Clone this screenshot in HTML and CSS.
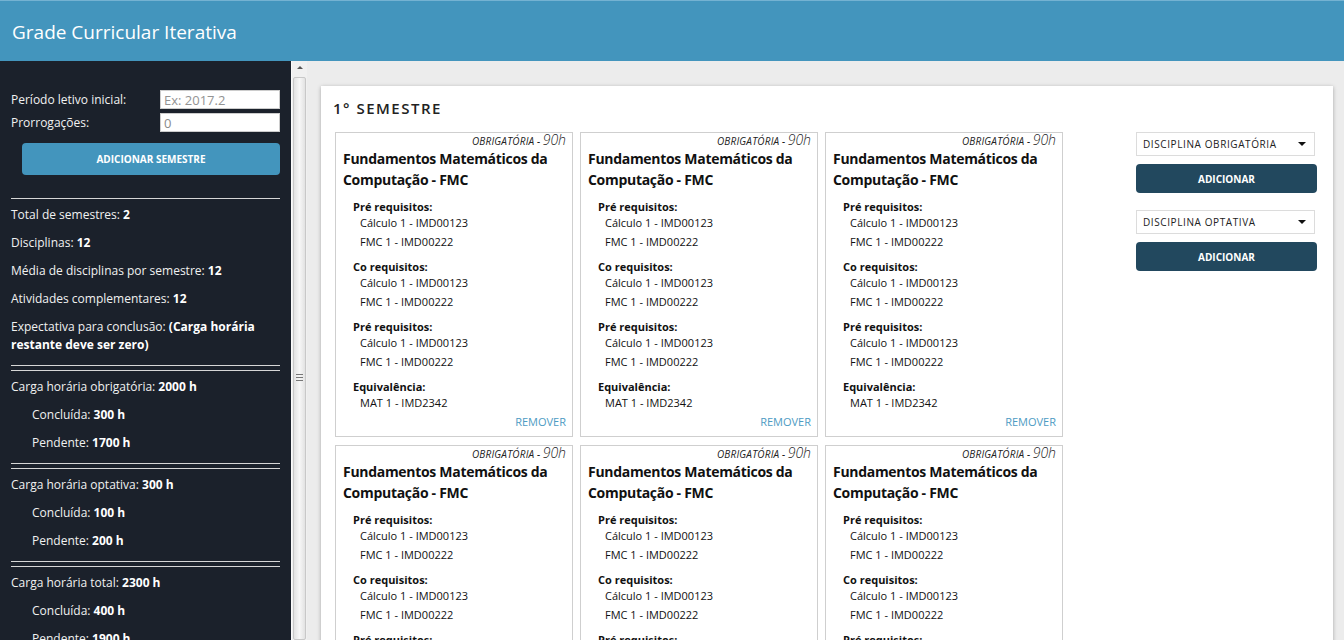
FILE: index.html
```html
<!DOCTYPE html>
<html lang="pt-BR">
<head>
<meta charset="utf-8">
<title>Grade Curricular Iterativa</title>
<link rel="stylesheet" href="styles.css">
</head>
<body>
<header class="topbar"><h1 class="brand">Grade Curricular Iterativa</h1></header>
<div class="layout">
  <aside class="sidebar">
    <div class="form-row"><label class="form-label">Período letivo inicial:</label><input class="form-input" placeholder="Ex: 2017.2"></div>
    <div class="form-row"><label class="form-label">Prorrogações:</label><input class="form-input" value="0"></div>
    <button class="btn btn-primary">ADICIONAR SEMESTRE</button>
    <div class="rule"></div>
    <div class="stats">
      <p>Total de semestres: <b>2</b></p>
      <p>Disciplinas: <b>12</b></p>
      <p>Média de disciplinas por semestre: <b>12</b></p>
      <p>Atividades complementares: <b>12</b></p>
      <p>Expectativa para conclusão: <b>(Carga horária restante deve ser zero)</b></p>
    </div>
    <div class="rule-double"></div>
    <div class="stats">
      <p>Carga horária obrigatória: <b>2000 h</b></p>
      <p class="sub">Concluída: <b>300 h</b></p>
      <p class="sub">Pendente: <b>1700 h</b></p>
    </div>
    <div class="rule-double"></div>
    <div class="stats">
      <p>Carga horária optativa: <b>300 h</b></p>
      <p class="sub">Concluída: <b>100 h</b></p>
      <p class="sub">Pendente: <b>200 h</b></p>
    </div>
    <div class="rule-double"></div>
    <div class="stats">
      <p>Carga horária total: <b>2300 h</b></p>
      <p class="sub">Concluída: <b>400 h</b></p>
      <p class="sub">Pendente: <b>1900 h</b></p>
    </div>
  </aside>
  <div class="scrollbar">
    <span class="scroll-arrow"></span>
    <div class="scroll-thumb"><span class="grip"></span></div>
  </div>
  <main class="content">
    <section class="panel">
      <h2 class="panel-title">1° SEMESTRE</h2>
      <div class="panel-body">
        <div class="cards">
          <article class="card">
            <div class="tag"><span class="tag-type">OBRIGATÓRIA</span> - <span class="tag-hours">90h</span></div>
            <h3 class="card-title">Fundamentos Matemáticos da Computação - FMC</h3>
            <div class="req"><h4>Pré requisitos:</h4><ul><li>Cálculo 1 - IMD00123</li><li>FMC 1 - IMD00222</li></ul></div>
            <div class="req"><h4>Co requisitos:</h4><ul><li>Cálculo 1 - IMD00123</li><li>FMC 1 - IMD00222</li></ul></div>
            <div class="req"><h4>Pré requisitos:</h4><ul><li>Cálculo 1 - IMD00123</li><li>FMC 1 - IMD00222</li></ul></div>
            <div class="req last"><h4>Equivalência:</h4><ul><li>MAT 1 - IMD2342</li></ul></div>
            <div class="remove">REMOVER</div>
          </article>
          <article class="card">
            <div class="tag"><span class="tag-type">OBRIGATÓRIA</span> - <span class="tag-hours">90h</span></div>
            <h3 class="card-title">Fundamentos Matemáticos da Computação - FMC</h3>
            <div class="req"><h4>Pré requisitos:</h4><ul><li>Cálculo 1 - IMD00123</li><li>FMC 1 - IMD00222</li></ul></div>
            <div class="req"><h4>Co requisitos:</h4><ul><li>Cálculo 1 - IMD00123</li><li>FMC 1 - IMD00222</li></ul></div>
            <div class="req"><h4>Pré requisitos:</h4><ul><li>Cálculo 1 - IMD00123</li><li>FMC 1 - IMD00222</li></ul></div>
            <div class="req last"><h4>Equivalência:</h4><ul><li>MAT 1 - IMD2342</li></ul></div>
            <div class="remove">REMOVER</div>
          </article>
          <article class="card">
            <div class="tag"><span class="tag-type">OBRIGATÓRIA</span> - <span class="tag-hours">90h</span></div>
            <h3 class="card-title">Fundamentos Matemáticos da Computação - FMC</h3>
            <div class="req"><h4>Pré requisitos:</h4><ul><li>Cálculo 1 - IMD00123</li><li>FMC 1 - IMD00222</li></ul></div>
            <div class="req"><h4>Co requisitos:</h4><ul><li>Cálculo 1 - IMD00123</li><li>FMC 1 - IMD00222</li></ul></div>
            <div class="req"><h4>Pré requisitos:</h4><ul><li>Cálculo 1 - IMD00123</li><li>FMC 1 - IMD00222</li></ul></div>
            <div class="req last"><h4>Equivalência:</h4><ul><li>MAT 1 - IMD2342</li></ul></div>
            <div class="remove">REMOVER</div>
          </article>
          <article class="card">
            <div class="tag"><span class="tag-type">OBRIGATÓRIA</span> - <span class="tag-hours">90h</span></div>
            <h3 class="card-title">Fundamentos Matemáticos da Computação - FMC</h3>
            <div class="req"><h4>Pré requisitos:</h4><ul><li>Cálculo 1 - IMD00123</li><li>FMC 1 - IMD00222</li></ul></div>
            <div class="req"><h4>Co requisitos:</h4><ul><li>Cálculo 1 - IMD00123</li><li>FMC 1 - IMD00222</li></ul></div>
            <div class="req"><h4>Pré requisitos:</h4><ul><li>Cálculo 1 - IMD00123</li><li>FMC 1 - IMD00222</li></ul></div>
            <div class="req last"><h4>Equivalência:</h4><ul><li>MAT 1 - IMD2342</li></ul></div>
            <div class="remove">REMOVER</div>
          </article>
          <article class="card">
            <div class="tag"><span class="tag-type">OBRIGATÓRIA</span> - <span class="tag-hours">90h</span></div>
            <h3 class="card-title">Fundamentos Matemáticos da Computação - FMC</h3>
            <div class="req"><h4>Pré requisitos:</h4><ul><li>Cálculo 1 - IMD00123</li><li>FMC 1 - IMD00222</li></ul></div>
            <div class="req"><h4>Co requisitos:</h4><ul><li>Cálculo 1 - IMD00123</li><li>FMC 1 - IMD00222</li></ul></div>
            <div class="req"><h4>Pré requisitos:</h4><ul><li>Cálculo 1 - IMD00123</li><li>FMC 1 - IMD00222</li></ul></div>
            <div class="req last"><h4>Equivalência:</h4><ul><li>MAT 1 - IMD2342</li></ul></div>
            <div class="remove">REMOVER</div>
          </article>
          <article class="card">
            <div class="tag"><span class="tag-type">OBRIGATÓRIA</span> - <span class="tag-hours">90h</span></div>
            <h3 class="card-title">Fundamentos Matemáticos da Computação - FMC</h3>
            <div class="req"><h4>Pré requisitos:</h4><ul><li>Cálculo 1 - IMD00123</li><li>FMC 1 - IMD00222</li></ul></div>
            <div class="req"><h4>Co requisitos:</h4><ul><li>Cálculo 1 - IMD00123</li><li>FMC 1 - IMD00222</li></ul></div>
            <div class="req"><h4>Pré requisitos:</h4><ul><li>Cálculo 1 - IMD00123</li><li>FMC 1 - IMD00222</li></ul></div>
            <div class="req last"><h4>Equivalência:</h4><ul><li>MAT 1 - IMD2342</li></ul></div>
            <div class="remove">REMOVER</div>
          </article>
        </div>
        <div class="actions">
          <div class="select"><span>DISCIPLINA OBRIGATÓRIA</span><span class="caret"></span></div>
          <button class="btn btn-dark">ADICIONAR</button>
          <div class="select"><span>DISCIPLINA OPTATIVA</span><span class="caret"></span></div>
          <button class="btn btn-dark">ADICIONAR</button>
        </div>
      </div>
    </section>
  </main>
</div>
</body>
</html>
```
FILE: styles.css
```css
* { box-sizing: border-box; }
html, body { margin: 0; padding: 0; height: 100%; overflow: hidden; }
body { font-family: "Open Sans", "Liberation Sans", sans-serif; background: #ececec; color: #222; }

.topbar {
  height: 61px;
  background: #4395bd;
  border-top: 1px solid #74b2d2;
  display: flex;
  align-items: center;
  padding: 3px 0 0 12px;
}
.brand { margin: 0; font-size: 19px; font-weight: 400; color: #fff; line-height: 1; }

.layout { display: flex; height: calc(100% - 61px); }

.sidebar {
  width: 291px;
  flex: none;
  background: #1b212b;
  color: #f1f1f1;
  padding: 29px 11px 0 11px;
  font-size: 12px;
  overflow: hidden;
}
.form-row { display: flex; align-items: center; justify-content: space-between; height: 19px; margin-bottom: 4px; }
.form-label { font-size: 12px; }
.form-input {
  width: 120px; height: 19px; border: 1px solid #ccc; background: #fff;
  font-family: "Open Sans", "Liberation Sans", sans-serif; font-size: 13px; color: #8a8a8a;
  padding: 0 3px; outline: none;
}
.form-input::placeholder { color: #939393; }

.btn {
  display: block; border: 0; border-radius: 4px; color: #fff; font-weight: 700;
  font-family: "Open Sans", "Liberation Sans", sans-serif; font-size: 10px; cursor: pointer;
}
.btn-primary { margin: 11px 0 0 11px; width: 258px; height: 32px; background: #4395bd; }

.rule { height: 1px; background: #d6d6d6; margin-top: 23px; }
.rule-double { height: 6px; border-top: 1px solid #d6d6d6; border-bottom: 1px solid #d6d6d6; }

.stats { padding: 7px 0 11px; }
.stats p { margin: 0 0 10px; line-height: 18px; font-size: 12px; }
.stats p:last-child { margin-bottom: 0; }
.stats b { font-weight: 700; color: #fff; }
.stats .sub { padding-left: 21px; }

.scrollbar {
  width: 16px; flex: none; background: #f0f0f0; border-left: 1px solid #fafafa;
  display: flex; flex-direction: column; align-items: center; padding-top: 5px;
}
.scroll-arrow {
  width: 0; height: 0; border-left: 3px solid transparent; border-right: 3px solid transparent;
  border-bottom: 3px solid #555; margin-bottom: 8px;
}
.scroll-thumb {
  flex: 1; width: 13px; border: 1px solid #c8c8c8; border-radius: 2px;
  background: linear-gradient(to right, #e2e2e2, #f7f7f7 50%, #e2e2e2);
  display: flex; justify-content: center; padding-top: 296px;
}
.grip {
  width: 7px; height: 7px;
  background: repeating-linear-gradient(to bottom, #777 0 1px, transparent 1px 3px);
}

.content { flex: 1; padding: 25px 11px 0 14px; overflow: hidden; }
.panel {
  background: #fff; box-shadow: 0 1px 4px rgba(0,0,0,0.3);
  padding: 14px 16px 0 14px; min-height: 600px;
}
.panel-title {
  margin: 0 0 16px -2px; font-size: 15px; line-height: 16px; font-weight: 600;
  letter-spacing: 1.5px; color: #222;
}
.panel-body { display: flex; align-items: flex-start; }
.cards { display: grid; grid-template-columns: repeat(3, 238px); column-gap: 7px; row-gap: 8px; }

.card { border: 1px solid #cfcfcf; padding: 0 6px 5px 7px; color: #111; }
.tag { text-align: right; line-height: 14px; font-style: italic; font-size: 10px; color: #222; }
.tag-type { font-size: 10px; letter-spacing: 0.2px; }
.tag-hours { font-size: 14px; font-weight: 300; }
.card-title { margin: 0 0 10px; font-size: 14px; line-height: 21px; font-weight: 700; letter-spacing: -0.3px; }
.req { margin: 0 0 8px 10px; }
.req.last { margin-bottom: 0; }
.req h4 { margin: 0; font-size: 11px; line-height: 13px; font-weight: 700; }
.req ul { list-style: none; margin: 0; padding: 0 0 0 7px; }
.req li { font-size: 11px; line-height: 19px; }
.req li:last-child { line-height: 20px; }
.remove { text-align: right; font-size: 11px; line-height: 18px; color: #4d9bc3; }

.actions { margin-left: auto; width: 181px; }
.select {
  width: 179px; height: 24px; border: 1px solid #dcdcdc; display: flex; align-items: center;
  justify-content: space-between; padding: 0 8px 0 6px; font-size: 10px; letter-spacing: 0.6px; color: #222;
  margin-bottom: 8px;
}
.caret { width: 0; height: 0; border-left: 4px solid transparent; border-right: 4px solid transparent; border-top: 4px solid #111; }
.btn-dark { width: 181px; height: 29px; background: #22485e; margin-bottom: 17px; }
```
